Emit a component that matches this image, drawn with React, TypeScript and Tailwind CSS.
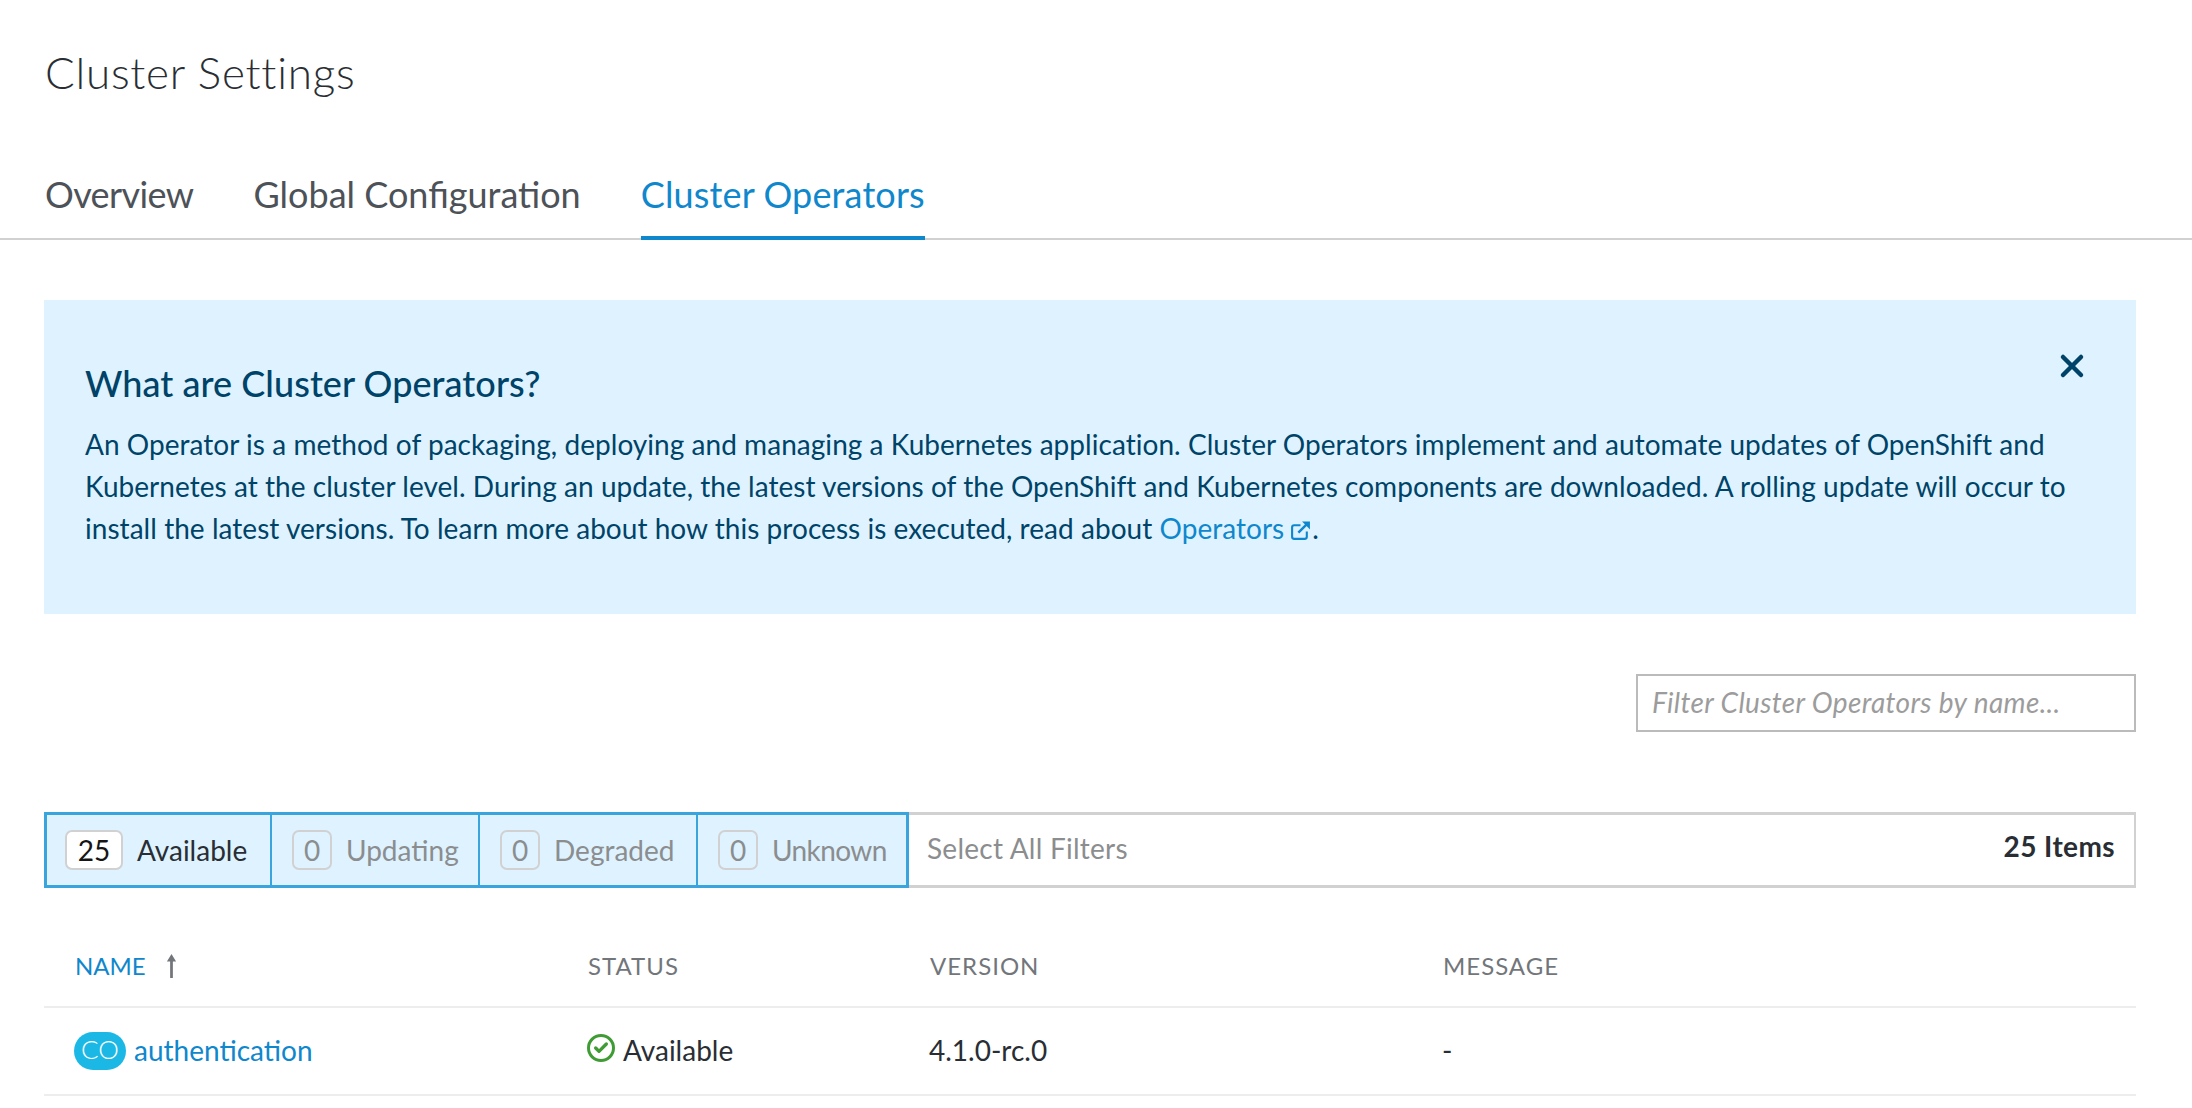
import { Check, X } from "lucide-react";

const filters = [
	{ count: 25, label: "Available", on: true, w: "w-[223px]", text: "" },
	{ count: 0, label: "Updating", on: false, w: "w-[208px]", text: "" },
	{ count: 0, label: "Degraded", on: false, w: "w-[218px]", text: "" },
	{ count: 0, label: "Unknown", on: false, w: "w-[210px]", text: "tracking-[-0.6px]" },
];

function ExternalLink() {
	return (
		<svg viewBox="0 0 20 20" className="mr-[1px] ml-[6px] inline-block h-[21px] w-[21px] align-[-2px]" fill="none">
			<path d="M16 11v5a2 2 0 0 1-2 2H4a2 2 0 0 1-2-2V7a2 2 0 0 1 2-2h6" stroke="#0f87cd" strokeWidth="2" />
			<path d="M8 12 17 3" stroke="#0f87cd" strokeWidth="2.4" />
			<path d="M11.5 1.5H19V9z" fill="#0f87cd" />
		</svg>
	);
}

export default function App() {
	return (
		<div className="h-[1108px] w-[2192px] overflow-hidden bg-white font-['Lato','Noto_Sans',sans-serif] text-[#151515]">
			<h1 className="px-[45px] pt-[45px] pb-[1px] text-[44px] leading-[54px] font-light tracking-[0.75px] text-[#292e34]">
				Cluster Settings
			</h1>
			<nav className="mt-[51px] flex h-[89px] gap-[60px] border-b-[2px] border-[#d1d1d1] px-[45px]">
				<a className="pt-[20px] text-[36px] leading-[46px] tracking-[-0.6px] text-[#4d5258]">Overview</a>
				<a className="pt-[20px] text-[36px] leading-[46px] text-[#4d5258]">Global Configuration</a>
				<a className="-mb-[2px] border-b-[4px] border-[#0f87cd] pt-[20px] text-[36px] leading-[46px] tracking-[0.15px] text-[#0f87cd]">
					Cluster Operators
				</a>
			</nav>

			<section className="relative mt-[60px] mr-[56px] ml-[44px] h-[314px] bg-[#def3ff] px-[41px] pt-[63px] text-[#004368]">
				<button className="absolute top-[48px] right-[46px] text-[#004368]">
					<X size={36} strokeWidth={3} />
				</button>
				<h2 className="text-[36px] leading-[40px] font-medium tracking-[0.05px]">What are Cluster Operators?</h2>
				<p className="mt-[20px] text-[28px] leading-[42px] tracking-[0.04px]">
					An Operator is a method of packaging, deploying and managing a Kubernetes application. Cluster Operators implement and automate updates of OpenShift and
					Kubernetes at the cluster level. During an update, the latest versions of the OpenShift and Kubernetes components are downloaded. A rolling update will occur to
					install the latest versions. To learn more about how this process is executed, read about{" "}
					<a className="text-[#0f87cd]">
						Operators
						<ExternalLink />
					</a>
					.
				</p>
			</section>

			<div className="mt-[60px] mr-[56px] ml-[44px] flex justify-end">
				<input
					placeholder="Filter Cluster Operators by name..."
					className="h-[58px] w-[500px] border-[2px] border-[#bbbbbb] px-[14px] pb-[2px] text-[28px] tracking-[0.36px] italic placeholder:text-[#9c9c9c]"
				/>
			</div>

			<div className="mt-[80px] mr-[56px] ml-[44px] flex h-[76px] items-center justify-between border-[3px] border-r-[2px] border-l-0 border-[#d1d1d1] pr-[19px]">
				<div className="-my-[3px] flex h-[76px] items-center">
					<div className="flex h-full border-[3px] border-[#39a5dc] bg-[#def3ff]">
						{filters.map((f, i) => (
							<div
								key={f.label}
								className={`flex items-center ${f.w} ${i > 0 ? "gap-[14px] border-l-[2px] border-[#39a5dc] pl-[20px]" : "gap-[14px] pl-[18px]"}`}
							>
								<span
									className={`flex h-[40px] items-center justify-center rounded-[7px] border-[2px] border-[#d1d1d1] text-[28px] ${
										f.on ? "w-[58px] bg-white text-[#151515]" : "w-[40px] text-[#8b8d8f]"
									}`}
								>
									{f.count}
								</span>
								<span className={`text-[28px] ${f.text} ${f.on ? "text-[#292e34]" : "text-[#8b8d8f]"}`}>{f.label}</span>
							</div>
						))}
					</div>
					<span className="ml-[18px] pb-[4px] text-[28px] tracking-[0.25px] text-[#8b8d8f]">Select All Filters</span>
				</div>
				<span className="pb-[9px] text-[28px] font-bold tracking-[0.4px] text-[#292e34]">25 Items</span>
			</div>

			<div className="mt-[50px] mr-[56px] ml-[44px]">
				<div className="grid h-[70px] grid-cols-[513px_342px_513px_1fr] items-center border-b-[2px] border-[#ededed] pb-[13px] pl-[31px] text-[24px] tracking-[1px] text-[#72767b]">
					<div className="flex items-center gap-[20px] tracking-[0px] text-[#0f87cd]">
						NAME
						<svg viewBox="0 0 12 26" className="h-[24px] w-[11px]">
							<path d="M6 0 11 8H7.5V26H4.5V8H1z" fill="#72767b" />
						</svg>
					</div>
					<div>STATUS</div>
					<div>VERSION</div>
					<div>MESSAGE</div>
				</div>
				<div className="grid h-[88px] grid-cols-[513px_342px_513px_1fr] items-center border-b-[2px] border-[#ededed] pb-[3px] pl-[30px] text-[28px]">
					<div className="flex items-center gap-[8px]">
						<span className="mt-[3px] flex h-[38px] w-[52px] items-center justify-center rounded-[19px] bg-[#1bb8e6] pb-[3px] text-[26px] font-light text-white">
							CO
						</span>
						<a className="text-[#0f87cd]">authentication</a>
					</div>
					<div className="flex items-center gap-[8px] text-[#292e34]">
						<span className="-mt-[3px] flex h-[28px] w-[28px] items-center justify-center rounded-full border-[3px] border-[#3f9c35]">
							<Check size={16} strokeWidth={5} className="text-[#3f9c35]" />
						</span>
						Available
					</div>
					<div className="text-[#292e34]">4.1.0-rc.0</div>
					<div className="text-[#292e34]">-</div>
				</div>
			</div>
		</div>
	);
}
